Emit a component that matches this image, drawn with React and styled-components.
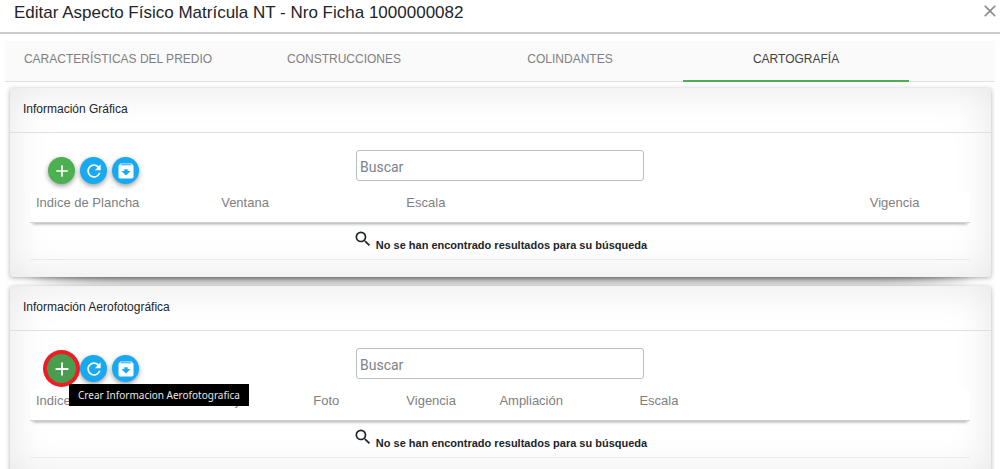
import React, { useState } from 'react';
import styled, { createGlobalStyle, css } from 'styled-components';
import { MdAdd, MdRefresh, MdArchive, MdSearch, MdClose } from 'react-icons/md';

const GlobalStyle = createGlobalStyle`
  * {
    box-sizing: border-box;
  }
  body {
    margin: 0;
    background: #fff;
    color: #212529;
    font-family: "Liberation Sans", Arial, sans-serif;
  }
`

const Modal = styled.div`
  height: 100vh;
  overflow: hidden;
`

const ModalHeader = styled.header`
  display: flex;
  justify-content: space-between;
  align-items: flex-start;
  height: 34px;
  padding: 0 0 0 14px;
  border-bottom: 2px solid #ccc;
  h1 {
    margin: 0;
    font-size: 17px;
    font-weight: 400;
    line-height: 26px;
  }
`

const CloseButton = styled.button`
  display: flex;
  padding: 1px 0;
  border: 0;
  background: none;
  color: #8a8a8a;
  font-size: 20px;
`

const Content = styled.main`
  margin: 7px 5px 0;
  background: #fdfdfd;
`

const TabBar = styled.nav`
  display: flex;
  height: 41px;
  background: #fafafa;
  border-bottom: 1px solid #e0e0e0;
`

const Tab = styled.button`
  flex: 0 0 22.83%;
  height: 41px;
  padding: 0 0 4px;
  border: 0;
  border-bottom: 2px solid ${props => props.$active ? '#4caf50' : 'transparent'};
  background: none;
  color: ${props => props.$active ? '#424242' : '#808080'};
  font-family: inherit;
  font-size: 12px;
  text-transform: uppercase;
`

const Panels = styled.div`
  position: relative;
  z-index: 0;
  display: flex;
  flex-direction: column;
  gap: 9px;
  padding: 6px 4px 8px 5px;
`

/* the ::before sits under the panel and gives the curved shadow at its foot */
const PanelBox = styled.section`
  position: relative;
  border-radius: 3px;
  background: #fff;
  box-shadow: 0 1px 4px rgba(0, 0, 0, .3), 0 0 40px rgba(0, 0, 0, .1) inset;
  &::before {
    content: "";
    position: absolute;
    z-index: -1;
    top: 50%;
    bottom: 0;
    left: 20px;
    right: 20px;
    border-radius: 100px / 10px;
    box-shadow: 0 0 16px rgba(0, 0, 0, .8);
  }
  h2 {
    margin: 0;
    padding: 0 13px 1px;
    border-bottom: 1px solid #e0e0e0;
    font-size: 12px;
    font-weight: 400;
    line-height: 43px;
  }
`

const PanelBody = styled.div`
  padding: 17px 21px 17px 20px;
`

const Toolbar = styled.div`
  display: grid;
  grid-template-columns: 1fr 288px 1fr;
  height: 42px;
`

const Actions = styled.div`
  display: flex;
  gap: 5px;
  padding: 7px 0 0 18px;
`

const ActionWrap = styled.div`
  position: relative;
  height: 27px;
`

const RoundButton = styled.button`
  display: flex;
  align-items: center;
  justify-content: center;
  width: 27px;
  height: 27px;
  padding: 0;
  border: 0;
  border-radius: 50%;
  background: ${props => props.$color};
  color: #fff;
  font-size: 20px;
  box-shadow: 0 2px 5px rgba(0, 0, 0, .4);
  ${props => props.$marked && css`
    background: #4a9c4f;
    font-size: 22px;
    box-shadow: 0 0 0 1px #4a9c4f, 0 0 0 5px #ee1c25;
  `}
`

const Tooltip = styled.span`
  position: absolute;
  z-index: 2;
  top: 29px;
  left: 21px;
  padding: 0 9px;
  background: #000;
  color: #e6e6e6;
  font-family: "Noto Sans", sans-serif;
  font-size: 10px;
  line-height: 22px;
  white-space: nowrap;
`

const SearchInput = styled.input`
  width: 100%;
  height: 31px;
  padding: 2px 3px 0;
  border: 1px solid #b9bec4;
  border-radius: 3px;
  background: #fff;
  font-family: Roboto, sans-serif;
  font-size: 14px;
  &::placeholder {
    color: #7a828a;
    opacity: 1;
  }
`

const Table = styled.table`
  width: 100%;
  table-layout: fixed;
  border-spacing: 0;
  thead tr {
    background: #fff;
    box-shadow: 0 4px 3px -3px rgba(0, 0, 0, .35);
  }
  th {
    height: 31px;
    padding: 0 6px 9px;
    border-bottom: 1px solid #d0d0d0;
    color: #808080;
    font-size: 13px;
    font-weight: 400;
    text-align: left;
    white-space: nowrap;
  }
  td {
    height: 37px;
    padding: 0;
    border-bottom: 1px solid #ebebeb;
  }
`

const Empty = styled.div`
  display: flex;
  justify-content: center;
  align-items: flex-end;
  gap: 3px;
  height: 36px;
  padding-bottom: 7px;
  font-size: 11px;
  font-weight: 700;
  line-height: 14px;
  svg {
    align-self: flex-start;
    margin-top: 6px;
    font-size: 20px;
  }
`

const tabs = ['Características del predio', 'Construcciones', 'Colindantes', 'Cartografía']

const panels = [
  {
    id: 'grafica',
    title: 'Información Gráfica',
    columns: [
      ['Indice de Plancha', '19.7%'],
      ['Ventana', '19.7%'],
      ['Escala', '49.3%'],
      ['Vigencia', 'auto'],
    ],
  },
  {
    id: 'aerofotografica',
    title: 'Información Aerofotográfica',
    tooltip: 'Crear Informacion Aerofotografica',
    columns: [
      ['Indice de Vuelo', '19.6%'],
      ['Faja', '9.9%'],
      ['Foto', '9.9%'],
      ['Vigencia', '9.9%'],
      ['Ampliación', '14.9%'],
      ['Escala', 'auto'],
    ],
  },
]

function Panel({ id, title, tooltip, columns }) {
  const [search, setSearch] = useState('')

  return (
    <PanelBox>
      <h2>{title}</h2>
      <PanelBody>
        <Toolbar>
          <Actions>
            <ActionWrap>
              <RoundButton $color="#4caf50" $marked={!!tooltip} aria-label="Crear">
                <MdAdd />
              </RoundButton>
              {tooltip && <Tooltip role="tooltip">{tooltip}</Tooltip>}
            </ActionWrap>
            <RoundButton $color="#17a9f1" aria-label="Actualizar"><MdRefresh /></RoundButton>
            <RoundButton $color="#17a9f1" aria-label="Archivar"><MdArchive /></RoundButton>
          </Actions>
          <SearchInput
            id={`search-${id}`}
            aria-label="Buscar"
            placeholder="Buscar"
            value={search}
            onChange={e => setSearch(e.target.value)}
          />
        </Toolbar>
        <Table>
          <colgroup>
            {columns.map(([name, width]) => <col key={name} width={width === 'auto' ? undefined : width} />)}
          </colgroup>
          <thead>
            <tr>
              {columns.map(([name]) => <th key={name}>{name}</th>)}
            </tr>
          </thead>
          <tbody>
            <tr>
              <td colSpan={columns.length}>
                <Empty>
                  <MdSearch />
                  <span>No se han encontrado resultados para su búsqueda</span>
                </Empty>
              </td>
            </tr>
          </tbody>
        </Table>
      </PanelBody>
    </PanelBox>
  )
}

export default function App() {
  const [active, setActive] = useState(3)

  return (
    <Modal>
      <GlobalStyle />
      <ModalHeader>
        <h1>Editar Aspecto Físico Matrícula NT - Nro Ficha 1000000082</h1>
        <CloseButton aria-label="Cerrar"><MdClose /></CloseButton>
      </ModalHeader>
      <Content>
        <TabBar>
          {tabs.map((name, i) => (
            <Tab key={name} $active={i === active} onClick={() => setActive(i)}>
              {name}
            </Tab>
          ))}
        </TabBar>
        <Panels>
          {panels.map(panel => <Panel key={panel.id} {...panel} />)}
        </Panels>
      </Content>
    </Modal>
  );
}
